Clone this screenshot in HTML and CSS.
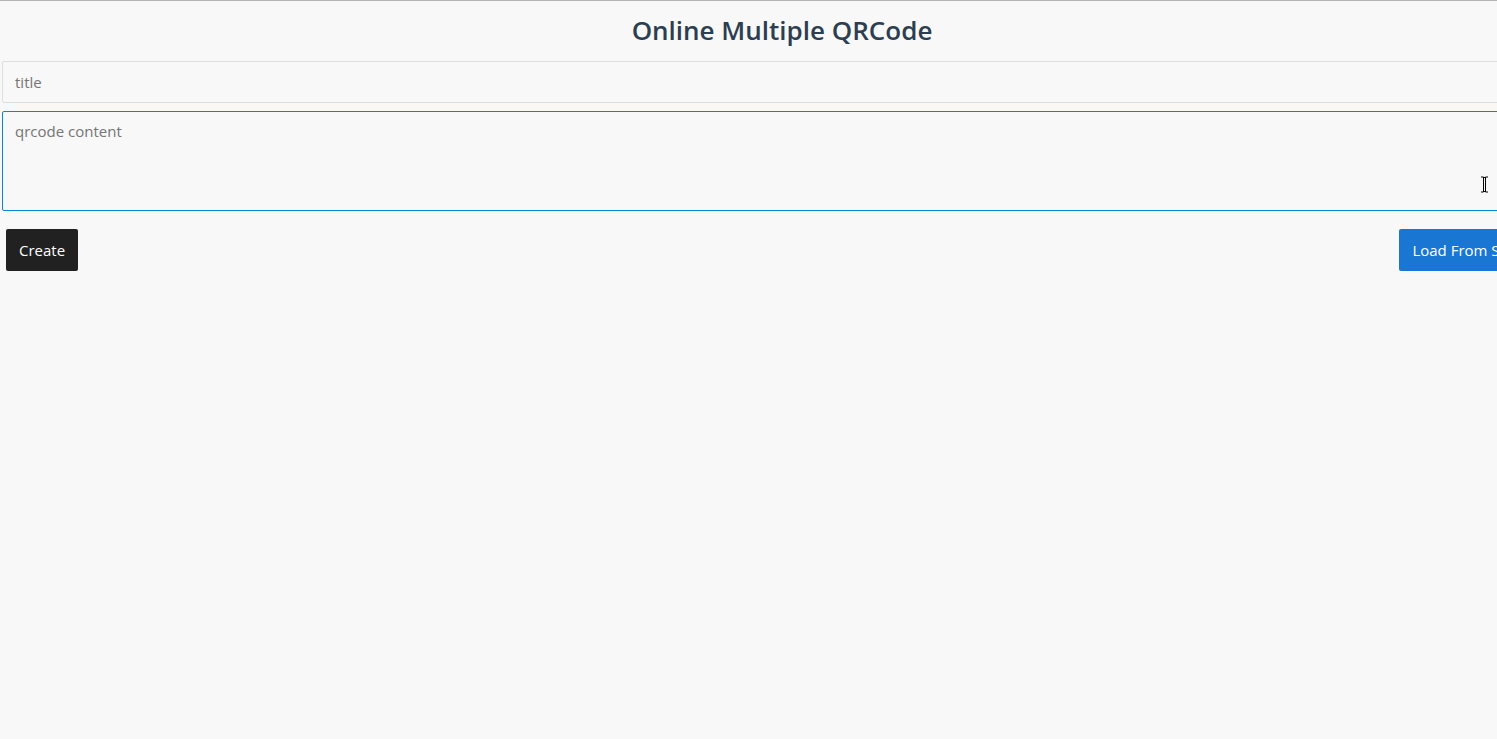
FILE: index.html
```html
<!DOCTYPE html>
<html lang="en">
<head>
<meta charset="utf-8">
<title>Online Multiple QRCode</title>
<link rel="stylesheet" href="styles.css">
</head>
<body>
<div class="page">
  <h1 class="title">Online Multiple QRCode</h1>
  <form class="form">
    <input class="field" type="text" placeholder="title">
    <div class="area-wrap">
      <textarea class="field area" placeholder="qrcode content"></textarea>
      <svg class="cursor" width="9" height="17" viewBox="0 0 9 17"><path d="M1 1h2.5v15H1M8 1H5.5v15H8M3.5 1.5h2M3.5 15.5h2" fill="none" stroke="#000" stroke-width="1"/></svg>
    </div>
    <div class="actions">
      <button type="button" class="btn btn-dark">Create</button>
      <button type="button" class="btn btn-blue">Load From Storage</button>
    </div>
  </form>
</div>
</body>
</html>
```

FILE: styles.css
```css
html {
  overflow: hidden;
  background: #f8f8f8;
}
body {
  margin: 0;
  border-top: 1px solid #b4b4b4;
  background: #f8f8f8;
  font-family: "Open Sans", "Liberation Sans", sans-serif;
  color: #2c3e50;
}
.page {
  width: 1564px;
  padding: 0 2px;
  box-sizing: border-box;
}
.title {
  margin: 0;
  height: 60px;
  padding-bottom: 2px;
  box-sizing: border-box;
  display: flex;
  align-items: center;
  justify-content: center;
  font-size: 26px;
  font-weight: 600;
  color: #2c3e50;
}
.form {
  display: flex;
  flex-direction: column;
  gap: 8px;
}
.field {
  display: block;
  width: 100%;
  box-sizing: border-box;
  height: 42px;
  padding: 0 12px;
  border: 1px solid #dedede;
  border-radius: 2px;
  background: #f8f8f8;
  font-family: inherit;
  font-size: 15px;
  color: #333;
  outline: none;
}
.field::placeholder {
  color: #757575;
}
.area-wrap {
  position: relative;
}
.area {
  height: 100px;
  padding: 9px 12px;
  border-color: #0a84d6;
  resize: none;
}
.cursor {
  position: absolute;
  left: 1478px;
  top: 65px;
}
.actions {
  display: flex;
  justify-content: space-between;
  padding: 10px 4px 0;
}
.btn {
  height: 42px;
  padding: 0 13px;
  border: none;
  border-radius: 2px;
  font-family: inherit;
  font-size: 15px;
  color: #fff;
  cursor: pointer;
}
.btn-dark {
  background: #212121;
}
.btn-blue {
  background: #1976d2;
}
```
